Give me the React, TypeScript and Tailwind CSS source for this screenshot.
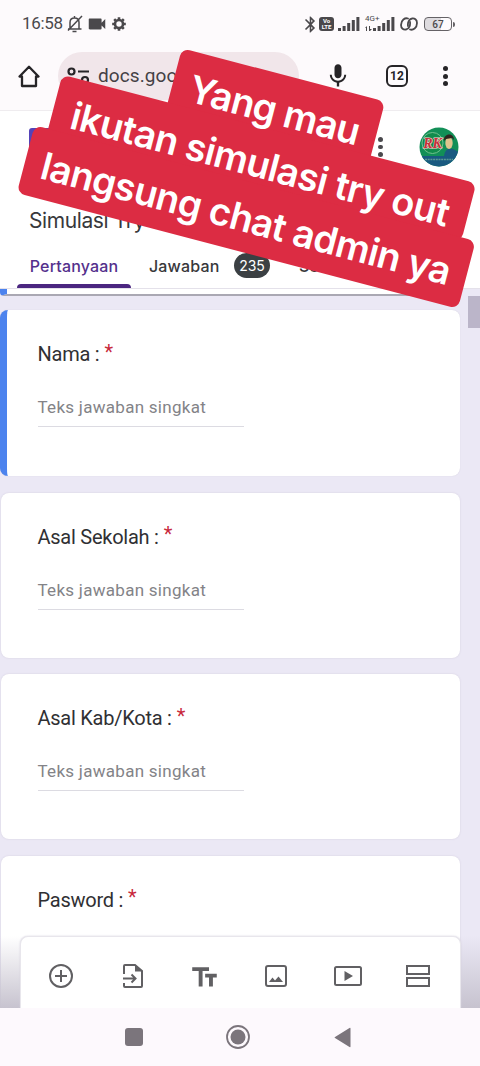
import React from "react";
import { MdBluetooth, MdVideocam, MdMic, MdTextFields } from "react-icons/md";

const questions = [
  { label: "Nama :", active: true },
  { label: "Asal Sekolah :", active: false },
  { label: "Asal Kab/Kota :", active: false },
  { label: "Pasword :", active: false },
];

const captionLines = [
  { text: "Yang mau", box: "w-[210px] h-[60px] rounded-t-lg", tracking: "tracking-[-0.8px]" },
  { text: "ikutan simulasi try out", box: "w-[428px] h-[60px] rounded-lg rounded-bl-none", tracking: "tracking-[-0.65px]" },
  { text: "langsung chat admin ya", box: "w-[456px] h-[70px] rounded-lg", tracking: "tracking-[-0.65px]" },
];

const SignalBars = () => (
  <svg width="22" height="14" viewBox="0 0 22 14" fill="#4a484b">
    <rect x="0" y="11" width="3" height="3" />
    <rect x="4.6" y="9" width="3" height="5" />
    <rect x="9.2" y="6" width="3" height="8" />
    <rect x="13.8" y="3" width="3" height="11" />
    <rect x="18.4" y="0" width="3" height="14" />
  </svg>
);

const StatusBar = () => (
  <div className="flex h-12 shrink-0 items-center pl-[22px] pr-[28px] text-[#4a484b]">
    <span className="w-[42px] whitespace-nowrap text-[17px] tracking-[-0.3px]">16:58</span>
    <svg className="ml-[3px]" width="16" height="18" viewBox="0 0 16 18" fill="none" stroke="currentColor" strokeWidth="1.5">
      <path d="M1 14h13.500M3 14V7.500C3 4.700 5 3 7.500 3S12 4.700 12 7.500V14M7.500 1v2M15 1 1 15.500M5.500 16.500h4" />
    </svg>
    <MdVideocam className="ml-[3px] h-[22px] w-[22px]" />
    <svg className="ml-[4px]" width="14" height="14" viewBox="0 0 14 14" fill="none" stroke="currentColor">
      <circle cx="7" cy="7" r="4" strokeWidth="2.600" />
      <path d="M7 .2v2.300M7 11.500v2.300M.2 7h2.300M11.500 7h2.300M2.200 2.200l1.500 1.500M10.300 10.300l1.500 1.500M2.200 11.800l1.500-1.500M10.300 3.700l1.500-1.500" strokeWidth="2.600" />
    </svg>
    <MdBluetooth className="ml-auto h-[19px] w-[19px]" />
    <span className="-ml-px flex h-[14px] w-[15px] flex-col items-center justify-center rounded-[3px] bg-[#4a484b] text-[6px] font-bold leading-[6px] text-white">
      <span>Vo</span>
      <span>LTE</span>
    </span>
    <span className="ml-[4px]">
      <SignalBars />
    </span>
    <span className="relative ml-[5px] flex w-[30px] justify-end">
      <span className="absolute left-0 top-[-2px] text-[8px] leading-[8px]">4G+</span>
      <svg className="absolute bottom-0 left-0" width="8" height="5" viewBox="0 0 8 5" fill="currentColor">
        <path d="M0 2 2 0v5H1V2zM4 0h1v3h2L5 5H4z" />
      </svg>
      <SignalBars />
    </span>
    <svg className="ml-[5px]" width="18" height="14" viewBox="0 0 18 14" fill="none" stroke="currentColor" strokeWidth="1.800" strokeLinecap="round">
      <path d="M8 1.500C5 .5 1 3 1 8c0 3.500 2.500 5 5 4.500C9 12 10.500 8.500 10 5" />
      <path d="M10 12.500c3 1 7-1.500 7-6.500 0-3.500-2.500-5-5-4.500C9 2 7.500 5.500 8 9" />
    </svg>
    <span className="relative ml-[6px] flex h-[14px] w-[28px] items-center justify-center rounded-[4px] border-[1.5px] border-[#656266] bg-[linear-gradient(90deg,#dedbdf_62%,#fdfafc_62%)] text-[10px] font-medium">
      67
      <span className="absolute right-[-4px] h-[5px] w-[2px] rounded-r bg-[#656266]" />
    </span>
  </div>
);

const BrowserBar = () => (
  <div className="flex h-[63px] shrink-0 items-start border-b border-[#efecef] pl-[18px] pt-1 text-[#262427]">
    <svg className="mt-[13px]" width="22" height="23" viewBox="0 0 22 23" fill="none" stroke="currentColor" strokeWidth="2.300" strokeLinejoin="round">
      <path d="M4 21V11.500H1.500L11 1.800l9.500 9.700H18V21z" />
    </svg>
    <div className="ml-[18px] flex h-12 w-[241px] items-center rounded-full bg-[#f1e6ea] pl-[9px]">
      <svg width="23" height="18" viewBox="0 0 23 18" fill="none" stroke="currentColor" strokeWidth="2.200">
        <circle cx="4.500" cy="4.500" r="3" />
        <path d="M11 4.500h11M0 13h11" />
        <circle cx="18" cy="13" r="3" />
      </svg>
      <span className="ml-[8px] text-[19px] tracking-[0.1px] text-[#444145]">docs.google.com</span>
    </div>
    <MdMic className="ml-[25px] mt-[9px] h-[30px] w-[28px]" />
    <span className="ml-[34px] mt-[13px] flex h-[22px] w-[22px] items-center justify-center rounded-[6px] border-[2.4px] border-[#262427] text-[12px] font-bold">
      12
    </span>
    <div className="ml-[35px] mt-[14px] flex flex-col gap-[2.5px]">
      <span className="h-[5px] w-[5px] rounded-full bg-[#262427]" />
      <span className="h-[5px] w-[5px] rounded-full bg-[#262427]" />
      <span className="h-[5px] w-[5px] rounded-full bg-[#262427]" />
    </div>
  </div>
);

const Avatar = () => (
  <svg className="ml-[36px] mt-4" width="40" height="40" viewBox="0 0 40 40">
    <clipPath id="avatar">
      <circle cx="20" cy="20" r="19.500" />
    </clipPath>
    <g clipPath="url(#avatar)">
      <rect width="40" height="40" fill="#128f57" />
      <path d="M0 29h25c1-7 5-8 9-7l6 3v15H0z" fill="#195a80" />
      <circle cx="13.500" cy="16" r="10.500" fill="#118c4c" stroke="#71c08f" strokeWidth="1" />
      <ellipse cx="30" cy="16" rx="3.700" ry="6" fill="#dfc58e" />
      <path d="M25 14c-1-8 10-9 10-1l-2-2-6 1z" fill="#30251f" />
      <text x="13.500" y="20.500" textAnchor="middle" fontFamily="Liberation Serif, serif" fontSize="14" fontWeight="bold" fontStyle="italic" fill="#c5303a" stroke="#f3d8cf" strokeWidth="1.2" paintOrder="stroke">
        RK
      </text>
      <path d="M6 32.500h28" stroke="#5b9a94" strokeWidth="1.600" strokeDasharray="2 .7" />
    </g>
  </svg>
);

const FormHeader = () => (
  <header className="flex h-[178px] shrink-0 flex-col border-b border-[#e4e1ea] bg-white font-[family-name:Inter,sans-serif] text-[#38383b]">
    <div className="flex h-[85px] items-start pl-[29px]">
      <span className="mt-[17px] h-[38px] w-[28px] rounded-[3px] bg-[#5542b8]" />
      <div className="ml-[321px] mt-[26px] flex w-[5px] flex-col gap-[3px]">
        <span className="h-[4.5px] w-[4.5px] rounded-full bg-[#4a494d]" />
        <span className="h-[4.5px] w-[4.5px] rounded-full bg-[#4a494d]" />
        <span className="h-[4.5px] w-[4.5px] rounded-full bg-[#4a494d]" />
      </div>
      <Avatar />
    </div>
    <h1 className="ml-[29px] mt-[10px] h-[30px] text-[21px] leading-[30px] tracking-[-0.4px]">Simulasi Try Out</h1>
    <nav className="mt-auto flex h-[45px] text-[16px] font-medium">
      <div className="ml-[17px] flex w-[114px] flex-col items-center text-[#54308c]">
        <span className="leading-[46px] tracking-[0.15px]">Pertanyaan</span>
        <span className="mt-[-5px] h-1 w-full shrink-0 rounded-t bg-[#4b2680]" />
      </div>
      <span className="ml-[18px] w-[71px] leading-[46px] tracking-[0.15px]">Jawaban</span>
      <span className="ml-[14px] mt-[10px] flex h-[25px] w-[36px] items-center justify-center rounded-full bg-[#3b4043] text-[14px] font-normal text-white">
        235
      </span>
      <span className="ml-[29px] leading-[46px]">Setelan</span>
    </nav>
  </header>
);

const QuestionCard = ({ label, active }: { label: string; active: boolean }) => (
  <section
    className={
      active
        ? "h-[166px] w-[460px] shrink-0 overflow-hidden rounded-lg border-l-[7px] border-[#4c83ee] bg-white pl-[30.5px] shadow-[0_0_1px_#c9c5d6]"
        : "ml-px h-[165px] w-[459px] shrink-0 rounded-lg bg-white pl-[36.5px] shadow-[0_0_2px_#d2cddd]"
    }
  >
    <p className="mt-[30px] flex h-[28px] items-center text-[20px] tracking-[-0.25px] text-[#303033]">
      {label}
      <span className="ml-[5px] mt-[-5px] text-[#c8293c]">*</span>
    </p>
    <p className="mt-[26px] w-[206px] whitespace-nowrap border-b border-[#dcdbe2] pb-[5px] text-[17px] leading-[27px] tracking-[0.28px] text-[#838387]">
      Teks jawaban singkat
    </p>
  </section>
);

const ToolBar = () => (
  <div className="absolute bottom-0 left-5 flex h-[72px] w-[441px] items-center rounded-t-lg border border-b-0 border-[#e8e6ec] bg-white pl-[28px] pt-[6px] text-[#616063] shadow-[0_0_2px_#d6d2de]">
    <svg width="24" height="24" viewBox="0 0 24 24" fill="none" stroke="currentColor" strokeWidth="2">
      <path d="M12 6v12M6 12h12" />
      <circle cx="12" cy="12" r="11" />
    </svg>
    <svg className="ml-[49px]" width="22" height="26" viewBox="0 0 22 26" fill="none" stroke="currentColor" strokeWidth="2">
      <path d="M2 11V3q0-1 1-1h10l7 6v15q0 1-1 1H3q-1 0-1-1v-3M1 15.500h12M9.500 11.500l4 4-4 4" />
      <path d="M13 2v6.500h7z" fill="currentColor" stroke="none" />
    </svg>
    <MdTextFields className="ml-[45px] mt-[3px] h-[31px] w-[31px]" />
    <svg className="ml-[45px]" width="22" height="22" viewBox="0 0 22 22" fill="none" stroke="currentColor" strokeWidth="2">
      <rect x="1" y="1" width="20" height="20" rx="2" />
      <path d="m4 17 3.500-4.500 2.500 3 3.500-4L18 17z" fill="currentColor" stroke="none" />
    </svg>
    <svg className="ml-[47px]" width="28" height="20" viewBox="0 0 28 20" fill="none" stroke="currentColor" strokeWidth="2">
      <rect x="1" y="1" width="26" height="18" rx="1.500" />
      <path d="M10.500 5v10l8.500-5z" fill="currentColor" stroke="none" />
    </svg>
    <svg className="ml-[44px]" width="24" height="22" viewBox="0 0 24 22" fill="none" stroke="currentColor" strokeWidth="2">
      <path d="M1 1h22v8H1zM1 13h22v8H1z" />
    </svg>
  </div>
);

const Caption = () => (
  <div className="absolute left-[63px] top-[17px] flex w-[456px] origin-top-left rotate-[14.7deg] flex-col items-center font-[family-name:Inter,sans-serif] text-[38px] font-semibold text-white">
    {captionLines.map((line, i) => (
      <div
        key={line.text}
        className={`${i > 0 ? "-mt-[4px]" : ""} ${line.box} ${line.tracking} flex justify-center whitespace-nowrap bg-[#dc2c43] pt-[8px] leading-[56px]`}
      >
        {/* keeps descenders above the next line's box */}
        <span className="relative">{line.text}</span>
      </div>
    ))}
  </div>
);

const NavigationBar = () => (
  <div className="flex h-[58px] shrink-0 items-center bg-[#fdf9fd] pl-[125px] text-[#7b757c]">
    <span className="h-[18px] w-[18px] rounded-[3px] bg-[#7b757c]" />
    <svg className="ml-[83px]" width="24" height="24" viewBox="0 0 24 24">
      <circle cx="12" cy="12" r="11" fill="none" stroke="currentColor" strokeWidth="1.800" />
      <circle cx="12" cy="12" r="7.500" fill="currentColor" />
    </svg>
    <svg className="ml-[84px]" width="17" height="21" viewBox="0 0 17 21">
      <path d="M16.500 1.500v18q0 1-1 .5L1 11q-1-.5 0-1L15.500 1q1-.5 1 .5z" fill="currentColor" />
    </svg>
  </div>
);

const App = () => {
  return (
    <div className="relative flex h-[1066px] w-[480px] flex-col overflow-hidden bg-[#fdfafc] font-[family-name:Roboto,sans-serif]">
      <StatusBar />
      <BrowserBar />
      <FormHeader />
      <main className="relative flex grow flex-col overflow-hidden bg-[#ebe8f5]">
        <div className="h-[7px] w-[460px] shrink-0 rounded-b-[4px] border-b-2 border-l-[7px] border-b-[#aaa8b3] border-l-[#4c83ee] bg-white" />
        <div className="mt-[14px] flex flex-col gap-[16.5px]">
          {questions.map((question) => (
            <QuestionCard key={question.label} {...question} />
          ))}
        </div>
        {/* Scrollbar */}
        <div className="absolute right-0 top-[7px] h-[32px] w-3 bg-[#bbb5c9]" />
        {/* Toolbar fade */}
        <div className="absolute bottom-0 left-0 h-[72px] w-full bg-linear-to-b from-transparent to-[#c7c3cf]" />
        <ToolBar />
      </main>
      <NavigationBar />
      <Caption />
    </div>
  );
};

export default App;
